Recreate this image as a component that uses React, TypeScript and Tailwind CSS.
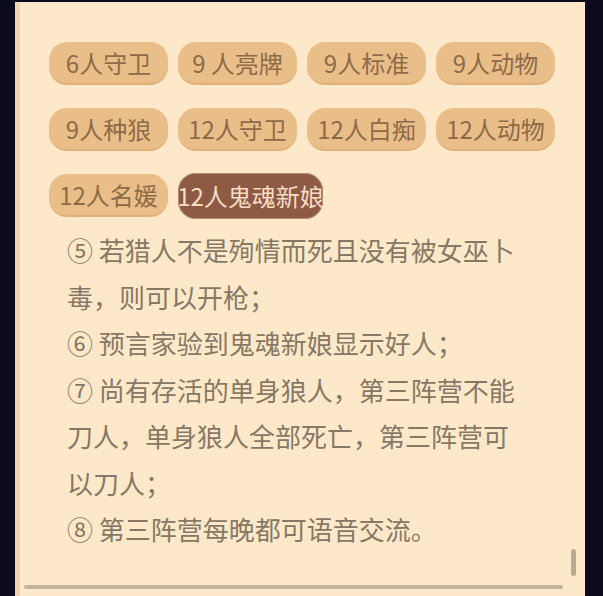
import React from "react";

const modes = [
  "6人守卫",
  "9 人亮牌",
  "9人标准",
  "9人动物",
  "9人种狼",
  "12人守卫",
  "12人白痴",
  "12人动物",
  "12人名媛",
  "12人鬼魂新娘",
];

const rules = [
  "⑤ 若猎人不是殉情而死且没有被女巫卜毒，则可以开枪；",
  "⑥ 预言家验到鬼魂新娘显示好人；",
  "⑦ 尚有存活的单身狼人，第三阵营不能刀人，单身狼人全部死亡，第三阵营可以刀人；",
  "⑧ 第三阵营每晚都可语音交流。",
];

const App = () => {
  const active = "12人鬼魂新娘";

  return (
    <div
      className="w-[603px] h-[596px] bg-[#0b0a1f] pt-[2px] pl-[15px] pr-[18px] overflow-hidden flex"
      style={{ fontFamily: '"Noto Sans CJK SC", "Noto Sans", sans-serif' }}
    >
      <div className="relative flex-1 bg-[#fde9c9] border-l-[5px] border-[#eed3ad]">
        {/* mode buttons */}
        <div className="flex flex-wrap gap-x-[10px] gap-y-[23px] pl-[29px] pt-[40px] w-[560px]">
          {modes.map((m) =>
            m === active ? (
              <div
                key={m}
                className="h-[46px] w-[145px] -mt-[1px] rounded-[18px] bg-[#8d5a44] text-[#f7dcc6] text-[24px] leading-none flex items-center justify-center whitespace-nowrap shadow-[inset_0_0_0_1px_#b98a70]"
              >
                {m}
              </div>
            ) : (
              <div
                key={m}
                className="w-[119px] h-[43px] rounded-[18px] bg-[#e9be89] border-b-[2px] border-[#e0b07a] text-[#8e6b48] text-[24px] leading-none flex items-center justify-center whitespace-nowrap"
              >
                {m}
              </div>
            )
          )}
        </div>

        {/* rules text */}
        <div className="pl-[47px] mt-[8px] w-[507px] text-[26px] leading-[46.5px] text-[#877865]">
          {rules.map((r) => (
            <p key={r}>{r}</p>
          ))}
        </div>

        {/* scrollbars */}
        <div className="absolute left-[4px] top-[583px] w-[539px] h-[4px] rounded-full bg-[#c4b39e]" />
        <div className="absolute left-[551px] top-[547px] w-[5px] h-[27px] rounded-full bg-[#bba993]" />
      </div>
    </div>
  );
};

export default App;
